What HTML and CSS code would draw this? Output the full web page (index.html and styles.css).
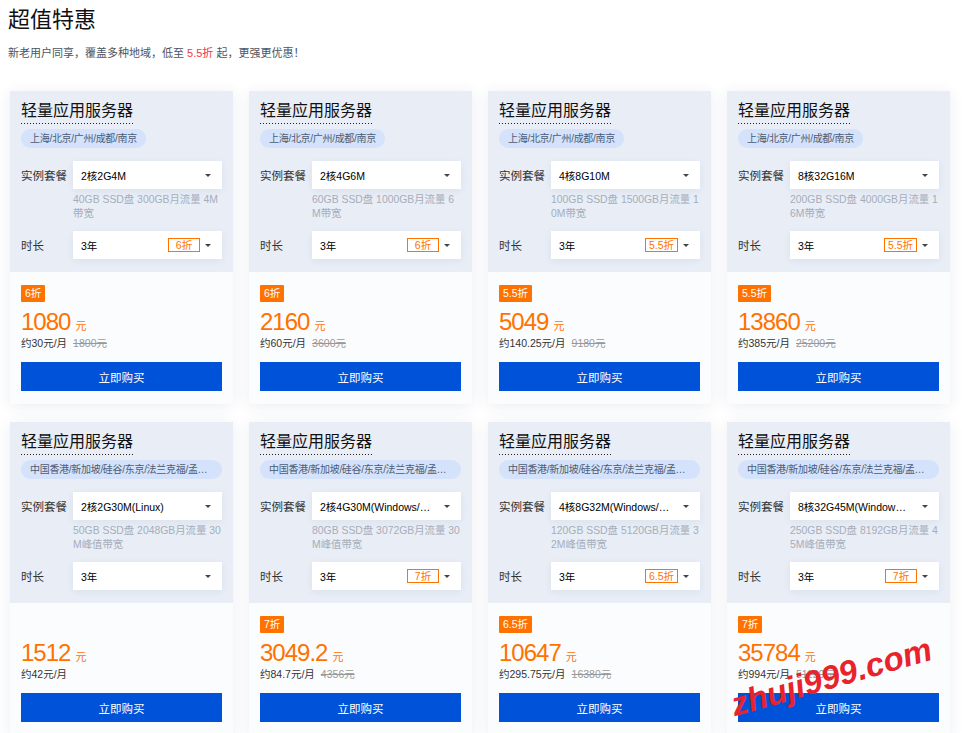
FILE: index.html
```html
<!DOCTYPE html>
<html lang="zh-CN">

<head>
  <meta charset="utf-8">
  <title>超值特惠</title>
  <link rel="stylesheet" href="styles.css">
</head>

<body>
  <div class="page">
    <div class="header">
      <h1>超值特惠</h1>
      <p class="sub">新老用户同享，覆盖多种地域，低至 <span class="red">5.5折</span> 起，更强更优惠！</p>
    </div>

    <div class="grid">
      <!-- row 1 -->
      <div class="card">
        <div class="card-top">
          <div class="title">轻量应用服务器</div>
          <div class="region">上海/北京/广州/成都/南京</div>
          <div class="row">
            <span class="label">实例套餐</span>
            <div class="select"><span class="val">2核2G4M</span><i class="caret"></i></div>
          </div>
          <div class="desc">40GB SSD盘 300GB月流量 4M带宽</div>
          <div class="row row-time">
            <span class="label">时长</span>
            <div class="select"><span class="val">3年</span><span class="off">6折</span><i class="caret"></i></div>
          </div>
        </div>
        <div class="card-bottom">
          <span class="badge">6折</span>
          <div class="price">1080<small>元</small></div>
          <div class="month">约30元/月<s>1800元</s></div>
          <button class="buy">立即购买</button>
        </div>
      </div>

      <div class="card">
        <div class="card-top">
          <div class="title">轻量应用服务器</div>
          <div class="region">上海/北京/广州/成都/南京</div>
          <div class="row">
            <span class="label">实例套餐</span>
            <div class="select"><span class="val">2核4G6M</span><i class="caret"></i></div>
          </div>
          <div class="desc">60GB SSD盘 1000GB月流量 6M带宽</div>
          <div class="row row-time">
            <span class="label">时长</span>
            <div class="select"><span class="val">3年</span><span class="off">6折</span><i class="caret"></i></div>
          </div>
        </div>
        <div class="card-bottom">
          <span class="badge">6折</span>
          <div class="price">2160<small>元</small></div>
          <div class="month">约60元/月<s>3600元</s></div>
          <button class="buy">立即购买</button>
        </div>
      </div>

      <div class="card">
        <div class="card-top">
          <div class="title">轻量应用服务器</div>
          <div class="region">上海/北京/广州/成都/南京</div>
          <div class="row">
            <span class="label">实例套餐</span>
            <div class="select"><span class="val">4核8G10M</span><i class="caret"></i></div>
          </div>
          <div class="desc">100GB SSD盘 1500GB月流量 10M带宽</div>
          <div class="row row-time">
            <span class="label">时长</span>
            <div class="select"><span class="val">3年</span><span class="off">5.5折</span><i class="caret"></i></div>
          </div>
        </div>
        <div class="card-bottom">
          <span class="badge">5.5折</span>
          <div class="price">5049<small>元</small></div>
          <div class="month">约140.25元/月<s>9180元</s></div>
          <button class="buy">立即购买</button>
        </div>
      </div>

      <div class="card">
        <div class="card-top">
          <div class="title">轻量应用服务器</div>
          <div class="region">上海/北京/广州/成都/南京</div>
          <div class="row">
            <span class="label">实例套餐</span>
            <div class="select"><span class="val">8核32G16M</span><i class="caret"></i></div>
          </div>
          <div class="desc">200GB SSD盘 4000GB月流量 16M带宽</div>
          <div class="row row-time">
            <span class="label">时长</span>
            <div class="select"><span class="val">3年</span><span class="off">5.5折</span><i class="caret"></i></div>
          </div>
        </div>
        <div class="card-bottom">
          <span class="badge">5.5折</span>
          <div class="price">13860<small>元</small></div>
          <div class="month">约385元/月<s>25200元</s></div>
          <button class="buy">立即购买</button>
        </div>
      </div>

      <!-- row 2 -->
      <div class="card">
        <div class="card-top">
          <div class="title">轻量应用服务器</div>
          <div class="region wide">中国香港/新加坡/硅谷/东京/法兰克福/孟买/首尔/曼谷</div>
          <div class="row">
            <span class="label">实例套餐</span>
            <div class="select"><span class="val">2核2G30M(Linux)</span><i class="caret"></i></div>
          </div>
          <div class="desc">50GB SSD盘 2048GB月流量 30M峰值带宽</div>
          <div class="row row-time">
            <span class="label">时长</span>
            <div class="select"><span class="val">3年</span><i class="caret"></i></div>
          </div>
        </div>
        <div class="card-bottom">
          <span class="badge hidden">无</span>
          <div class="price">1512<small>元</small></div>
          <div class="month">约42元/月</div>
          <button class="buy">立即购买</button>
        </div>
      </div>

      <div class="card">
        <div class="card-top">
          <div class="title">轻量应用服务器</div>
          <div class="region wide">中国香港/新加坡/硅谷/东京/法兰克福/孟买/首尔/曼谷</div>
          <div class="row">
            <span class="label">实例套餐</span>
            <div class="select"><span class="val">2核4G30M(Windows/Linux)</span><i class="caret"></i></div>
          </div>
          <div class="desc">80GB SSD盘 3072GB月流量 30M峰值带宽</div>
          <div class="row row-time">
            <span class="label">时长</span>
            <div class="select"><span class="val">3年</span><span class="off">7折</span><i class="caret"></i></div>
          </div>
        </div>
        <div class="card-bottom">
          <span class="badge">7折</span>
          <div class="price">3049.2<small>元</small></div>
          <div class="month">约84.7元/月<s>4356元</s></div>
          <button class="buy">立即购买</button>
        </div>
      </div>

      <div class="card">
        <div class="card-top">
          <div class="title">轻量应用服务器</div>
          <div class="region wide">中国香港/新加坡/硅谷/东京/法兰克福/孟买/首尔/曼谷</div>
          <div class="row">
            <span class="label">实例套餐</span>
            <div class="select"><span class="val">4核8G32M(Windows/Linux)</span><i class="caret"></i></div>
          </div>
          <div class="desc">120GB SSD盘 5120GB月流量 32M峰值带宽</div>
          <div class="row row-time">
            <span class="label">时长</span>
            <div class="select"><span class="val">3年</span><span class="off">6.5折</span><i class="caret"></i></div>
          </div>
        </div>
        <div class="card-bottom">
          <span class="badge">6.5折</span>
          <div class="price">10647<small>元</small></div>
          <div class="month">约295.75元/月<s>16380元</s></div>
          <button class="buy">立即购买</button>
        </div>
      </div>

      <div class="card">
        <div class="card-top">
          <div class="title">轻量应用服务器</div>
          <div class="region wide">中国香港/新加坡/硅谷/东京/法兰克福/孟买/首尔/曼谷</div>
          <div class="row">
            <span class="label">实例套餐</span>
            <div class="select"><span class="val">8核32G45M(Windows/Linux)</span><i class="caret"></i></div>
          </div>
          <div class="desc">250GB SSD盘 8192GB月流量 45M峰值带宽</div>
          <div class="row row-time">
            <span class="label">时长</span>
            <div class="select"><span class="val">3年</span><span class="off">7折</span><i class="caret"></i></div>
          </div>
        </div>
        <div class="card-bottom">
          <span class="badge">7折</span>
          <div class="price">35784<small>元</small></div>
          <div class="month">约994元/月<s>51120元</s></div>
          <button class="buy">立即购买</button>
        </div>
      </div>
    </div>

    <div class="watermark">zhuji999.com</div>
  </div>
</body>

</html>
```

FILE: styles.css
```css
body {
  margin: 0;
  background-color: #fff;
  font-family: "Liberation Sans", "Noto Sans CJK SC", sans-serif;
  color: #333;
}

.page {
  position: relative;
  overflow: hidden;
  height: 733px;
}

.header {
  padding: 5px 8px 0;
}

.header h1 {
  margin: 0;
  font-size: 22px;
  line-height: 30px;
  font-weight: normal;
  color: #111;
}

.sub {
  margin: 9px 0 0;
  font-size: 11px;
  line-height: 18px;
  color: #4b5563;
}

.red {
  color: #f2383e;
}

.grid {
  display: grid;
  grid-template-columns: repeat(4, 223px);
  column-gap: 16px;
  row-gap: 18px;
  margin: 29px 0 0 10px;
}

.card {
  background-color: #fbfcfe;
  box-shadow: 0 2px 14px rgba(40, 60, 110, 0.09);
}

.card-top {
  background-color: #e8edf6;
  padding: 10px 11px 13px;
}

.title {
  width: fit-content;
  font-size: 16px;
  line-height: 20px;
  color: #111;
  padding-bottom: 3px;
  background-image: linear-gradient(to right, #222 1px, transparent 1px);
  background-size: 3px 1px;
  background-repeat: repeat-x;
  background-position: 0 100%;
}

.region {
  width: fit-content;
  margin-top: 5px;
  height: 19px;
  line-height: 19px;
  padding: 0 9px;
  border-radius: 10px;
  background-color: #d4e2fb;
  color: #4d5b74;
  font-size: 10px;
  letter-spacing: -0.3px;
}

.region.wide {
  width: auto;
  overflow: hidden;
  white-space: nowrap;
  text-overflow: ellipsis;
}

.row {
  display: flex;
  align-items: center;
  margin-top: 13px;
}

.row-time {
  margin-top: 10px;
}

.label {
  width: 52px;
  flex-shrink: 0;
  font-size: 11.5px;
  color: #333;
}

.select {
  flex: 1;
  min-width: 0;
  height: 28px;
  background-color: #fff;
  display: flex;
  align-items: center;
  padding: 0 11px 0 8px;
  box-shadow: 0 2px 8px rgba(40, 60, 110, 0.06);
}

.val {
  flex: 1;
  min-width: 0;
  font-size: 10.5px;
  color: #000;
  overflow: hidden;
  white-space: nowrap;
  text-overflow: ellipsis;
}

.off {
  min-width: 32px;
  box-sizing: border-box;
  text-align: center;
  border: 1px solid #ff7200;
  color: #ff7200;
  font-size: 10.5px;
  line-height: 12px;
  padding: 0 3px;
  margin: 0 5px 0 6px;
}

.caret {
  width: 0;
  height: 0;
  margin-left: 12px;
  border-left: 3px solid transparent;
  border-right: 3px solid transparent;
  border-top: 3.5px solid #444;
}

.off + .caret {
  margin-left: 0;
}

.desc {
  margin: 4px -1px 0 52px;
  font-size: 10.4px;
  line-height: 14px;
  color: #a6adba;
  word-break: break-all;
}

.card-bottom {
  display: flex;
  flex-direction: column;
  align-items: flex-start;
  padding: 13px 11px 13px;
}

.badge {
  height: 17px;
  line-height: 17px;
  padding: 0 4px;
  background-color: #ff7200;
  color: #fff;
  font-size: 10.5px;
  border-radius: 1px;
}

.badge.hidden {
  visibility: hidden;
}

.price {
  margin-top: 8px;
  height: 24px;
  font-size: 24px;
  line-height: 24px;
  letter-spacing: -1px;
  color: #ff7200;
}

.price small {
  font-size: 11px;
  line-height: 1;
  letter-spacing: 0;
  margin-left: 5px;
}

.month {
  height: 18px;
  font-size: 10.5px;
  line-height: 18px;
  color: #333;
}

.month s {
  margin-left: 6px;
  color: #999;
}

.buy {
  align-self: stretch;
  height: 29px;
  margin-top: 10px;
  border: none;
  background-color: #0052d9;
  color: #fff;
  font-family: inherit;
  font-size: 11.5px;
  cursor: pointer;
}

.watermark {
  position: absolute;
  left: 737px;
  top: 686px;
  font-size: 33px;
  font-weight: bold;
  font-style: italic;
  color: #e8232b;
  transform: rotate(-16deg);
  transform-origin: left bottom;
}
```
